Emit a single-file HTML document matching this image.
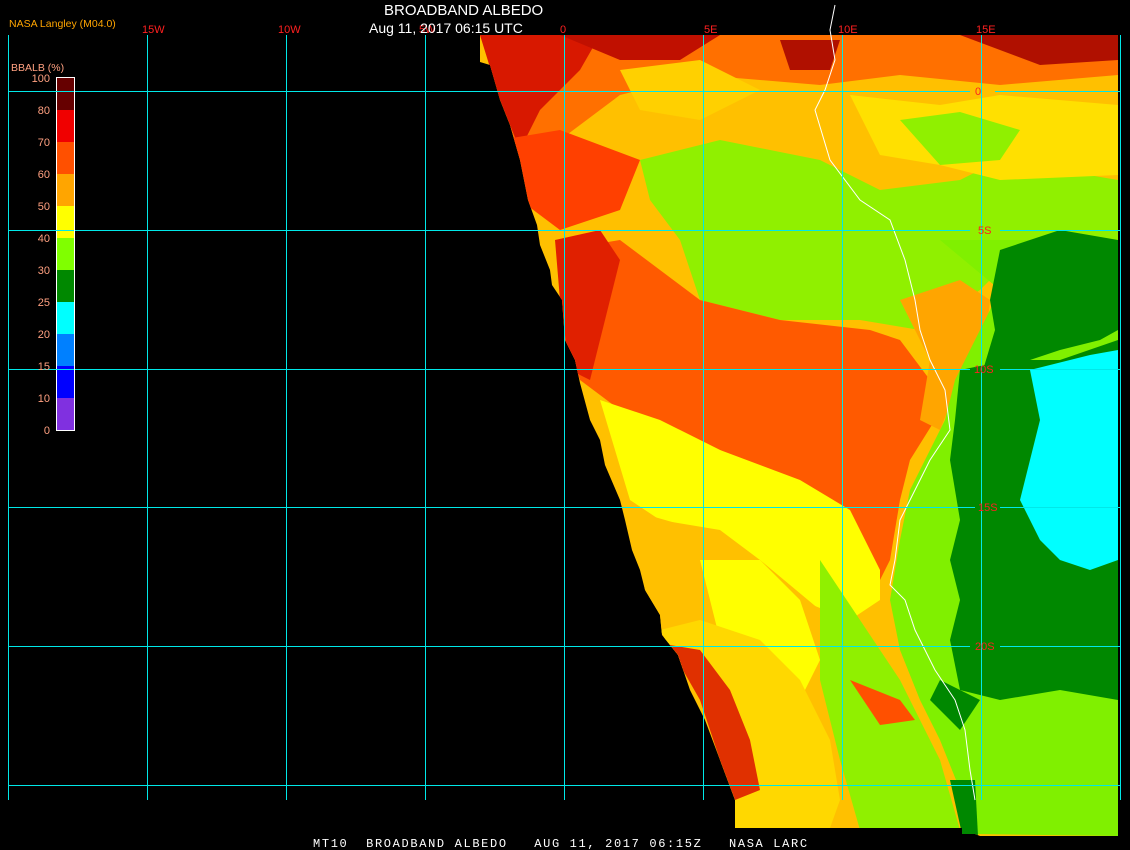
<!DOCTYPE html>
<html><head><meta charset="utf-8"><style>
html,body{margin:0;padding:0;background:#000;width:1130px;height:850px;overflow:hidden}
svg{display:block}
text{font-family:"Liberation Sans",sans-serif}
</style></head><body>
<svg width="1130" height="850" viewBox="0 0 1130 850" xmlns="http://www.w3.org/2000/svg">
<defs>
<clipPath id="land"><polygon points="480,35 1118,35 1118,836 980,836 975,834 962,834 962,828 735,828 735,800 720,760 705,720 690,690 678,655 662,635 660,615 645,590 640,570 632,550 625,520 620,500 605,465 600,440 590,420 580,383 575,360 565,340 562,300 552,285 550,270 540,245 537,225 528,200 520,160 510,125 500,100 490,65 480,62"/></clipPath>
</defs>
<g clip-path="url(#land)">
<rect x="470" y="30" width="660" height="810" fill="#ffc000"/>
<!-- top -->
<polygon points="480,35 1118,35 1118,75 1000,85 900,75 820,85 700,75 620,95 560,140 520,160" fill="#ff7000"/>
<polygon points="480,35 600,35 580,70 540,110 520,150 500,100" fill="#d81800"/>
<polygon points="560,35 720,35 680,60 620,60" fill="#c01000"/>
<polygon points="960,35 1118,35 1118,60 1040,65" fill="#b01000"/>
<polygon points="780,40 840,40 830,70 790,70" fill="#b01000"/>
<polygon points="620,70 700,60 760,90 700,120 640,110" fill="#ffd000"/>
<polygon points="500,140 560,130 640,160 620,210 560,230 520,200" fill="#ff4000"/>
<!-- green north center -->
<polygon points="640,160 720,140 820,160 880,190 960,180 1000,160 1118,180 1118,260 1000,270 980,290 920,330 860,320 780,320 700,300 680,240 650,200" fill="#90f000"/>
<polygon points="850,95 940,105 1000,95 1118,105 1118,175 1000,180 940,165 880,155" fill="#ffe000"/>
<polygon points="900,120 960,112 1020,130 1000,160 940,165" fill="#90f000"/>
<!-- big orange-red center -->
<polygon points="560,250 620,240 700,300 780,320 870,330 900,340 930,380 935,420 910,460 900,500 890,560 880,580 860,540 820,500 760,470 720,450 680,430 620,410 580,380 565,340" fill="#ff5a00"/>
<polygon points="555,240 600,230 620,260 600,340 590,380 570,370 560,300" fill="#e02000"/>
<polygon points="900,300 960,280 990,300 985,350 960,380 940,430 920,420 930,360" fill="#ffa500"/>
<!-- yellow band -->
<polygon points="600,400 660,420 720,450 800,480 850,510 880,570 880,600 850,620 800,600 760,560 720,530 660,520 630,500" fill="#ffff00"/>
<polygon points="630,510 700,530 760,560 820,610 860,660 900,700 910,720 880,720 840,690 760,700 720,700 690,680 665,640 645,590" fill="#ffc000"/>
<polygon points="700,560 760,560 800,600 820,660 800,700 740,700 720,640" fill="#ffff00"/>
<!-- right greens -->
<polygon points="940,240 1118,240 1118,836 975,834 960,790 940,740 920,700 900,650 890,600 900,540 910,490 930,450 945,420 955,380 980,330 1000,290" fill="#80f000"/>
<polygon points="1000,250 1060,230 1118,240 1118,330 1100,340 1060,350 1030,360 1000,380 980,380 995,330 990,300" fill="#008800"/>
<polygon points="960,370 1010,360 1060,360 1118,340 1118,700 1060,690 1000,700 960,690 950,640 960,600 950,560 960,520 950,460 955,420" fill="#008800"/>
<polygon points="1030,370 1090,355 1118,350 1118,560 1090,570 1060,560 1040,540 1020,500 1030,460 1040,420" fill="#00ffff"/>
<polygon points="940,680 980,700 960,730 930,700" fill="#008800"/>
<polygon points="950,780 975,780 978,836 962,834" fill="#008800"/>
<!-- south west -->
<polygon points="660,630 700,620 760,640 800,680 830,740 840,800 830,828 735,828 720,760 700,700" fill="#ffd800"/>
<polygon points="670,645 700,650 730,690 750,740 760,790 735,800 720,760 700,700 680,665" fill="#e03000"/>
<polygon points="820,560 860,620 900,680 940,760 960,830 860,830 840,760 820,680" fill="#90f000"/>
<polygon points="850,680 900,700 915,720 880,725" fill="#ff5000"/>
</g>
<!-- coastline -->
<polyline points="835,5 830,30 835,60 825,90 815,110 830,160 860,200 890,220 905,260 915,300 920,330 930,360 945,390 950,430 930,460 915,490 900,520 895,560 890,585 905,600 915,630 935,670 955,700 965,730 970,770 975,800" fill="none" stroke="#fff" stroke-width="1"/>
<!-- grid -->
<g stroke="#00e8e8" stroke-width="1" fill="none">
<path d="M8.5 35V800M147.5 35V800M286.5 35V800M425.5 35V800M564.5 35V800M703.5 35V800M842.5 35V800M981.5 35V800M1120.5 35V800"/>
<path d="M8 91.5H970M995 91.5H1121M8 230.5H970M1000 230.5H1121M8 369.5H970M1000 369.5H1121M8 507.5H975M1000 507.5H1121M8 646.5H970M1000 646.5H1121M8 785.5H1121"/>
</g>
<g fill="#ff2020" font-size="11">
<text x="142" y="33">15W</text><text x="278" y="33">10W</text><text x="419" y="33">5W</text><text x="560" y="33">0</text>
<text x="704" y="33">5E</text><text x="838" y="33">10E</text><text x="976" y="33">15E</text>
<text x="975" y="95">0</text><text x="978" y="234">5S</text><text x="974" y="373">10S</text><text x="978" y="511">15S</text><text x="975" y="650">20S</text>
</g>
<text x="384" y="15" fill="#fff" font-size="15">BROADBAND ALBEDO</text>
<text x="369" y="33" fill="#fff" font-size="14">Aug 11, 2017 06:15 UTC</text>
<text x="9" y="27" fill="#ffa500" font-size="10.5">NASA Langley (M04.0)</text>
<text x="11" y="71" fill="#ffa080" font-size="10.5">BBALB (%)</text>
<g>
<rect x="57" y="78" width="17" height="32" fill="#660000"/>
<rect x="57" y="110" width="17" height="32" fill="#f00000"/>
<rect x="57" y="142" width="17" height="32" fill="#ff5000"/>
<rect x="57" y="174" width="17" height="32" fill="#ffa500"/>
<rect x="57" y="206" width="17" height="32" fill="#ffff00"/>
<rect x="57" y="238" width="17" height="32" fill="#80ff00"/>
<rect x="57" y="270" width="17" height="32" fill="#008800"/>
<rect x="57" y="302" width="17" height="32" fill="#00ffff"/>
<rect x="57" y="334" width="17" height="32" fill="#0080ff"/>
<rect x="57" y="366" width="17" height="32" fill="#0000ff"/>
<rect x="57" y="398" width="17" height="32" fill="#8030e0"/>
<rect x="56.5" y="77.5" width="18" height="353" fill="none" stroke="#fff"/>
<path d="M8 91.5H74M8 230.5H74M8 369.5H74" stroke="#00e8e8"/>
</g>
<g fill="#ffa080" font-size="11" text-anchor="end">
<text x="50" y="82">100</text><text x="50" y="114">80</text><text x="50" y="146">70</text><text x="50" y="178">60</text>
<text x="50" y="210">50</text><text x="50" y="242">40</text><text x="50" y="274">30</text><text x="50" y="306">25</text>
<text x="50" y="338">20</text><text x="50" y="370">15</text><text x="50" y="402">10</text><text x="50" y="434">0</text>
</g>
<text x="313" y="847" fill="#fff" font-size="12" style="font-family:'Liberation Mono',monospace;letter-spacing:1.65px;white-space:pre">MT10  BROADBAND ALBEDO   AUG 11, 2017 06:15Z   NASA LARC</text>
</svg>
</body></html>
